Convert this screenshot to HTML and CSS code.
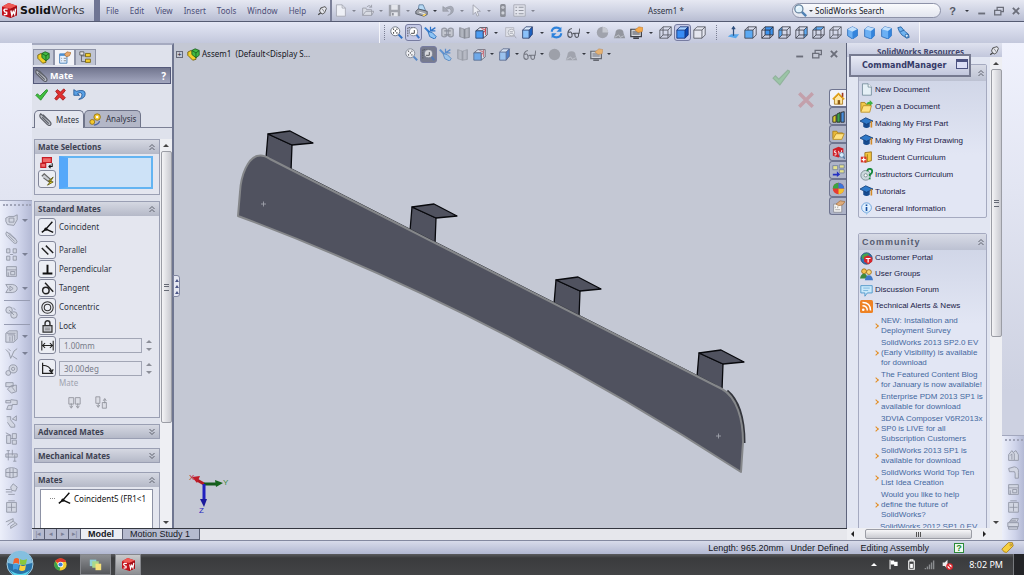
FILE: index.html
```html
<!DOCTYPE html>
<html lang="en">
<head>
    <meta charset="utf-8">
    <title>SolidWorks - Assem1</title>
    <link rel="stylesheet" href="styles.css">
</head>
<body>
    <svg class="sprite" aria-hidden="true">
        <symbol id="sw" viewBox="0 0 16 16"><path d="M0 4L7 0l9 3v10l-7 3-9-3z" fill="#c3121c"/><path d="M0 4L7 0l9 3-7 3z" fill="#ef5a55"/><path d="M9 6l7-3v10l-7 3z" fill="#a50d16"/><path d="M6 6.500H3l-1 1 1 2 2 .5v2l-3 .5M9.500 8l1 5 1.500-4 1.500 3 1-6" fill="none" stroke="#fff" stroke-width="1.500"/></symbol>
        <symbol id="pin" viewBox="0 0 16 16"><path d="M2 14l5-4" stroke="#444" stroke-width="2"/><path d="M6 3l7-2 2 3-3 7-4 2-4-5z" fill="#e6e8ee" stroke="#555" stroke-width="1.500"/><path d="M7 4q3 1 4 5" fill="none" stroke="#555"/></symbol>
        <symbol id="new" viewBox="0 0 16 16"><path d="M3 1h7l4 4v10H3z" fill="#eef0f6" stroke="#a2a5b0"/><path d="M10 1v4h4" fill="none" stroke="#a2a5b0"/></symbol>
        <symbol id="open" viewBox="0 0 16 16"><path d="M2 14V5h4l1 2h6v7zM2 14l4-5h10l-3 5" fill="#d9dce4" stroke="#9699a4"/><path d="M7 4q3-4 6 0m0-3v3h-3" fill="none" stroke="#9699a4"/></symbol>
        <symbol id="save" viewBox="0 0 16 16"><path d="M1 1h14v14H1z" fill="#a0a3ac"/><path d="M4 1h8v6H4zM4 10h8v5H4z" fill="#e4e6ec"/><path d="M5 11h2v3H5z" fill="#8a8d96"/></symbol>
        <symbol id="print" viewBox="0 0 16 16"><path d="M4 7L5 1h5l3 7z" fill="#b6daf6" stroke="#5b7b9b"/><path d="M1 9l3-3 11 3v4l-4 2-10-3z" fill="#a0a3ab" stroke="#484b55"/><path d="M5 10l7 2" stroke="#fff"/><path d="M9 14l3-2 2 1-3 2z" fill="#ffd75a"/></symbol>
        <symbol id="undo" viewBox="0 0 16 16"><path d="M1 3v6h7L5.500 7Q10 4 11 8t-4 6q8-2 7-8T4 5z" fill="#a6aab6" stroke="#868a96" stroke-width=".6"/></symbol>
        <symbol id="select" viewBox="0 0 16 16"><path d="M5 1v12l3-3 2 5 2-1-2-5h4z" fill="#eceef4" stroke="#9a9da8"/></symbol>
        <symbol id="rebuild" viewBox="0 0 16 16"><rect x="5" y="0" width="7" height="16" rx="2" fill="#8b8e97"/><circle cx="8.500" cy="4" r="2" fill="#c4c7cf"/><circle cx="8.500" cy="11" r="2" fill="#d0d3da"/></symbol>
        <symbol id="options" viewBox="0 0 16 16"><path d="M1 1h14v14H1z" fill="#e2e4ec" stroke="#a0a3ad"/><path d="M3 4h2M3 8h2M3 12h2M7 4h6M7 8h6M7 12h6" stroke="#9396a0" stroke-width="1.500"/></symbol>
        <symbol id="magnifier" viewBox="0 0 16 16"><path d="M9 9l6 6" stroke="#4f81b4" stroke-width="3"/><circle cx="6" cy="6" r="5" fill="#dff2fc" stroke="#64809c" stroke-width="1.500"/><path d="M3 6q1-3 4-3" stroke="#fff" fill="none"/></symbol>
        <symbol id="zoomfit" viewBox="0 0 16 16"><path d="M10 10l5 5" stroke="#2d6fc4" stroke-width="2.500"/><circle cx="6.500" cy="6.500" r="5.500" fill="#fff" stroke="#59616f"/><path d="M4 4h1M8 4h1M4 8.500h1M8 8.500h1M6 6h1" stroke="#222" stroke-width="2"/></symbol>
        <symbol id="zoomarea" viewBox="0 0 16 16"><path d="M1 13V2h9" fill="none" stroke="#444" stroke-dasharray="2 1"/><path d="M11 10l4 5" stroke="#3f78c8" stroke-width="2.500"/><circle cx="8" cy="7" r="5" fill="#fff" stroke="#7c8290"/><path d="M5 9h4V5" fill="none" stroke="#222"/></symbol>
        <symbol id="prev" viewBox="0 0 16 16"><path d="M1 2l6 6" stroke="#347dd2" stroke-width="2.500"/><path d="M5 7l5 1 5 5-2 3-6-3z" fill="#8cc3f5" stroke="#2267b4"/><path d="M8 6l6-4M14 6H8V1" fill="none" stroke="#2f74c8" stroke-width="1.500"/></symbol>
        <symbol id="lens" viewBox="0 0 16 16"><path d="M1 4q3-3 6 0v8q-3 3-6 0zM9 4q3-3 6 0v8q-3 3-6 0z" fill="#c3c6cf" stroke="#9599a5" stroke-width="1.500"/><path d="M4 6h8M4 11h8" stroke="#8b8f9a" stroke-width="1.500"/></symbol>
        <symbol id="sheets" viewBox="0 0 16 16"><path d="M2 2l6 2v11l-6-2zM8 4l6-2v12l-6 1z" fill="#a3a7b1" stroke="#868a94"/><path d="M5 3v11M11 3v11" stroke="#c5c9d2"/></symbol>
        <symbol id="section" viewBox="0 0 16 16"><path d="M1 6l5-4h9v9l-5 4V6z" fill="#dfe6f2" stroke="#373a48"/><path d="M1 6h9v9H1z" fill="#4c9df3" stroke="#27436e"/><path d="M8 3l5 2-3 4M13 2v9" fill="none" stroke="#c8323a"/></symbol>
        <symbol id="page" viewBox="0 0 16 16"><path d="M2 2h10v11H2z" fill="#dfe1e9" stroke="#b0b3bc"/><circle cx="9" cy="8" r="4" fill="#eceef3" stroke="#a4a7b1"/><path d="M12 11l3 4M7 7h4M7 9h4" stroke="#9c9faa"/></symbol>
        <symbol id="cube" viewBox="0 0 16 16"><path d="M2 5l4-4h8v9l-4 5H2z" fill="#dcecfe"/><path d="M10 5l4-4v9l-4 5z" fill="#1c61c2"/><path d="M2 5h8v10H2z" fill="#8ac1fa"/><path d="M2 5l4-4h8v9l-4 5H2zM2 5h8v10M10 5l4-4" fill="none" stroke="#293a66"/></symbol>
        <symbol id="refresh" viewBox="0 0 16 16"><path d="M2 7q1-5 6-5 3 0 5 2M14 9q-1 5-6 5-3 0-5-2" fill="none" stroke="#2d82db" stroke-width="2.500"/><path d="M14 1v6H8zM2 15V9h6z" fill="#2d82db"/></symbol>
        <symbol id="glasses" viewBox="0 0 16 16"><path d="M6 3Q1 4 1 10q0 4 3 4t2-4-4-2M7 10q1-2 2 0M10 9q-1 5 2 5t2-5M9 9h6q0-4 1-6" fill="none" stroke="#50535d" stroke-width="1.300"/></symbol>
        <symbol id="ball" viewBox="0 0 16 16"><circle cx="8" cy="8" r="7" fill="#a0a3ad"/><path d="M8 1v7h7A7 7 0 0 0 8 1z" fill="#c6c9d1"/></symbol>
        <symbol id="ball2" viewBox="0 0 16 16"><circle cx="8" cy="8" r="7" fill="#8d9098"/></symbol>
        <symbol id="scene" viewBox="0 0 16 16"><path d="M1 15l2-6a5 5 0 1 1 10 0l2 6z" fill="#93969f"/><path d="M2 14l5-3 2 3 4-2" stroke="#c9ccd4" fill="none"/></symbol>
        <symbol id="screen" viewBox="0 0 16 16"><path d="M1 4h13v9H1z" fill="#d8dade" stroke="#3e4048" stroke-width="1.500"/><path d="M3 6h9v5H3z" fill="#8e9199"/><path d="M4 15h7" stroke="#3e4048" stroke-width="2"/><path d="M6 5l5-4 5 1-1 5-5 1z" fill="#f5a94a" stroke="#b47023" stroke-width=".6"/></symbol>
        <symbol id="wire" viewBox="0 0 16 16"><path d="M1 5h10v10H1zM5 1h10v10H5zM1 5l4-4M11 5l4-4M11 15l4-4M1 15l4-4" fill="none" stroke="#50535d"/></symbol>
        <symbol id="outline" viewBox="0 0 16 16"><path d="M1 5l4-4h10v10l-4 4H1z" fill="#e4e6ef" stroke="#50535d"/><path d="M1 5h10v10M11 5l4-4" fill="none" stroke="#50535d"/></symbol>
        <symbol id="solid" viewBox="0 0 16 16"><path d="M1 5l4-4h10v10l-4 4H1z" fill="#a8d2ff"/><path d="M11 5l4-4v10l-4 4z" fill="#0b49b4"/><path d="M1 5h10v10H1z" fill="#398df5"/><path d="M1 5l4-4h10v10l-4 4H1zM1 5h10v10M11 5l4-4" fill="none" stroke="#152f72"/></symbol>
        <symbol id="normal" viewBox="0 0 16 16"><path d="M1 13l4-3h10l-4 5z" fill="#56a6ec"/><path d="M8 12V1M6 4l2-3 2 3" fill="none" stroke="#2d4f7e" stroke-width="1.500"/></symbol>
        <symbol id="c-front" viewBox="0 0 16 16"><path d="M1 5h10v10H1z" fill="#5ba9f3"/><path d="M1 5h10v10H1zM5 1h10v10l-4 4M5 5V1M1 5l4-4M11 5l4-4" fill="none" stroke="#3d404b"/></symbol>
        <symbol id="c-back" viewBox="0 0 16 16"><path d="M5 1h10v10H5z" fill="#3d93ee"/><path d="M1 5h10v10H1zM5 1h10v10H5zM1 5l4-4M11 5l4-4M11 15l4-4M1 15l4-4" fill="none" stroke="#2b2e39"/></symbol>
        <symbol id="c-left" viewBox="0 0 16 16"><path d="M1 5l4-4v10l-4 4z" fill="#5ba9f3"/><path d="M1 5h10v10H1zM5 1h10v10H5zM1 5l4-4M11 5l4-4M11 15l4-4M1 15l4-4" fill="none" stroke="#3d404b"/></symbol>
        <symbol id="c-right" viewBox="0 0 16 16"><path d="M11 5l4-4v10l-4 4z" fill="#5ba9f3"/><path d="M1 5h10v10H1zM5 1h10v10H5zM1 5l4-4M11 5l4-4M11 15l4-4M1 15l4-4" fill="none" stroke="#3d404b"/></symbol>
        <symbol id="c-top" viewBox="0 0 16 16"><path d="M1 5l4-4h10l-4 4z" fill="#5ba9f3"/><path d="M1 5h10v10H1zM5 1h10v10H5zM1 5l4-4M11 5l4-4M11 15l4-4M1 15l4-4" fill="none" stroke="#3d404b"/></symbol>
        <symbol id="hex" viewBox="0 0 16 16"><path d="M8 1l6 3v8l-6 4-6-4V4z" fill="#6cb0f4" stroke="#2869b6"/><path d="M8 1l6 3-6 3-6-3z" fill="#c2e0fc"/><path d="M8 7l6-3v8l-6 4z" fill="#3484dc"/></symbol>
        <symbol id="hex2" viewBox="0 0 16 16"><path d="M6 1l8 2v9l-4 4-8-3V4z" fill="#6cb0f4" stroke="#2869b6"/><path d="M6 1l8 2-4 3-8-2z" fill="#c2e0fc"/><path d="M10 6l4-3v9l-4 4z" fill="#3484dc"/></symbol>
        <symbol id="scope" viewBox="0 0 16 16"><path d="M1 2l4-1 4 5 5 4 1 4-3 1-6-4-3-4z" fill="#6fb3f0" stroke="#1f5c9f"/><circle cx="12" cy="12" r="2" fill="#d5eafc" stroke="#1f5c9f"/><path d="M4 7l5-2" stroke="#1f5c9f"/></symbol>
        <symbol id="min" viewBox="0 0 16 16"><path d="M2 12h11" stroke="#6b6e7a" stroke-width="3"/></symbol>
        <symbol id="restore" viewBox="0 0 16 16"><path d="M5 6V2h10v7h-4M1 7h10v7H1z" fill="none" stroke="#6b6e7a" stroke-width="2"/></symbol>
        <symbol id="close" viewBox="0 0 16 16"><path d="M3 3l10 10M13 3L3 13" stroke="#6b6e7a" stroke-width="3"/></symbol>
        <symbol id="asm" viewBox="0 0 16 16"><path d="M1 5l4-2 6 5v6l-4 1-6-6z" fill="#f2cf27" stroke="#6b5909"/><path d="M6 3l4-2 5 2v6l-4 3-5-4z" fill="#42b943" stroke="#175d1b"/><path d="M6 3l5 3v6M11 6l4-3" fill="none" stroke="#175d1b"/></symbol>
        <symbol id="props" viewBox="0 0 16 16"><path d="M2 4h9v11H2z" fill="#e6f1ff" stroke="#3572b0"/><path d="M2 3h9v3H2z" fill="#4b8fd3"/><path d="M4 9h1M7 9h3M4 12h1M7 12h3" stroke="#777"/><path d="M8 4l3-3 5 1-2 4-4 1z" fill="#e9a86a" stroke="#9b6128" stroke-width=".7"/></symbol>
        <symbol id="custom" viewBox="0 0 16 16"><path d="M2 5h10v10H2z" fill="#f6f6f4" stroke="#8a8c94"/><path d="M4 8v2M7 8v2M4 12h6" stroke="#999"/><path d="M5 5l5-4 6 1-3 4-5 1z" fill="#dcab7c" stroke="#9b6128" stroke-width=".7"/></symbol>
        <symbol id="config" viewBox="0 0 16 16"><path d="M3 3v10h6M3 6h6" fill="none" stroke="#555"/><path d="M1 1h5v4H1z" fill="#e4e4e4" stroke="#555"/><path d="M8 3h6v4H8zM8 10h6v4H8z" fill="#f3cd2f" stroke="#72600b"/></symbol>
        <symbol id="clip" viewBox="0 0 16 16"><path d="M2 1l11 9q3 3 1 5-2 1-4-1L2 6q-2-3 0-5zM4 5l8 8M5 2l8 8" fill="#b9bcc4" stroke="#5d6068" stroke-width="1.400"/></symbol>
        <symbol id="ok" viewBox="0 0 16 16"><path d="M1 9l2-2 3 3 8-8 2 1-9 12z" fill="#3fbf3f" stroke="#208520"/></symbol>
        <symbol id="cancel" viewBox="0 0 16 16"><path d="M2 4l2-2 4 3 4-4 2 2-4 5 4 4-3 3-4-4-4 4-2-2 4-5z" fill="#e03030" stroke="#9e1818"/></symbol>
        <symbol id="back" viewBox="0 0 16 16"><path d="M1 2v7h7L5.500 7Q10 4 11 8t-4 6q8-1 8-7T4 4z" fill="#5aa2e6" stroke="#1e5292"/></symbol>
        <symbol id="gear" viewBox="0 0 16 16"><circle cx="10" cy="5" r="4" fill="#f4c82c" stroke="#8b6b10"/><circle cx="10" cy="5" r="1.500" fill="#fff"/><circle cx="4" cy="11" r="3" fill="#f4c82c" stroke="#8b6b10"/><path d="M6 15q6-1 7-5" fill="none" stroke="#4a63a6" stroke-width="1.500"/></symbol>
        <symbol id="up2" viewBox="0 0 16 16"><path d="M3 8l5-5 5 5M3 14l5-5 5 5" fill="none" stroke="#50535f" stroke-width="1.800"/></symbol>
        <symbol id="down2" viewBox="0 0 16 16"><path d="M3 2l5 5 5-5M3 8l5 5 5-5" fill="none" stroke="#50535f" stroke-width="1.800"/></symbol>
        <symbol id="entities" viewBox="0 0 16 16"><path d="M3 2h11v6H3zM1 9h6v5H1z" fill="#f06a6a" stroke="#c51d25" stroke-width="1.500"/><path d="M15 9v4h-4m2-2l-2 2 2 2" fill="none" stroke="#111" stroke-width="1.300"/></symbol>
        <symbol id="multi" viewBox="0 0 16 16"><path d="M1 4l3-3 8 7-2 3-7-5" fill="#c9ccd3" stroke="#666" stroke-width="1.500"/><path d="M15 5l-6 5h3l-4 5 7-4-3-1z" fill="#f0dc22" stroke="#59530d"/></symbol>
        <symbol id="coincident" viewBox="0 0 16 16"><path d="M14 1L6 10M1 14l5-4 9 4" fill="none" stroke="#111" stroke-width="1.800"/><circle cx="6" cy="10" r="2" fill="#111"/></symbol>
        <symbol id="parallel" viewBox="0 0 16 16"><path d="M1 5l8 8M6 2l9 9" stroke="#222" stroke-width="1.800"/></symbol>
        <symbol id="perp" viewBox="0 0 16 16"><path d="M8 2v11M2 13h12" stroke="#111" stroke-width="2.400"/></symbol>
        <symbol id="tangent" viewBox="0 0 16 16"><circle cx="6" cy="10.500" r="4" fill="none" stroke="#222" stroke-width="1.800"/><path d="M5 1l10 11" stroke="#222" stroke-width="1.800"/></symbol>
        <symbol id="concentric" viewBox="0 0 16 16"><circle cx="8" cy="8" r="7" fill="none" stroke="#333" stroke-width="1.300"/><circle cx="8" cy="8" r="4" fill="none" stroke="#333" stroke-width="1.300"/></symbol>
        <symbol id="lock" viewBox="0 0 16 16"><path d="M5 7V4q0-3 3-3t3 3v3" fill="none" stroke="#333" stroke-width="1.800"/><path d="M2.500 7h11v8h-11z" fill="#c9cbd2" stroke="#333" stroke-width="1.500"/><path d="M5 10h6M5 12h6" stroke="#777"/></symbol>
        <symbol id="distance" viewBox="0 0 16 16"><path d="M1 2v12M15 2v12M2 8h12M5 5L2 8l3 3M11 5l3 3-3 3" fill="none" stroke="#222" stroke-width="1.300"/></symbol>
        <symbol id="angle" viewBox="0 0 16 16"><path d="M2 1v13h13M2 4q9 0 11 8M10 10l3 3 2-4" fill="none" stroke="#222" stroke-width="1.500"/></symbol>
        <symbol id="align" viewBox="0 0 16 16"><path d="M1 2h6v8H1zM9 2h6v8H9zM4 9v5M2 12l2 3 2-3M12 9v5M10 12l2 3 2-3" fill="#dcdee6" stroke="#8c8f98"/></symbol>
        <symbol id="anti" viewBox="0 0 16 16"><path d="M1 1h5v8H1zM9 8h5v7H9zM4 9v4M2 11l2 3 2-3M12 9V4M10 6l2-3 2 3" fill="#dcdee6" stroke="#8c8f98"/></symbol>
        <!-- greyed assembly tools -->
        <symbol id="g1" viewBox="0 0 16 16"><path d="M1 5l4-2h6l4-2v6l-4 7-8-1-2-4zM5 5h6v5H5z"/></symbol>
        <symbol id="g2" viewBox="0 0 16 16"><path d="M2 1l11 9q3 3 1 5-2 1-4-1L2 6q-2-3 0-5zM4 5l8 8M5 2l8 8"/></symbol>
        <symbol id="g3" viewBox="0 0 16 16"><path d="M2 1h4v5H2zM10 1h4v5h-4zM2 10h4v5H2zM10 10h4v5h-4zM6 8h4"/></symbol>
        <symbol id="g4" viewBox="0 0 16 16"><path d="M2 2h12v12H2zM2 6h12M7 8h5v4H7zM4 9v5"/></symbol>
        <symbol id="g5" viewBox="0 0 16 16"><path d="M1 3h8q6 1 6 5t-6 5H1l3-5zM6 5l4 3-4 3z"/></symbol>
        <symbol id="g6" viewBox="0 0 16 16"><circle cx="5" cy="5" r="4"/><circle cx="11" cy="11" r="4"/><path d="M5 5l6 6M10 2l3 3"/></symbol>
        <symbol id="g7" viewBox="0 0 16 16"><path d="M1 4l4-3h10v10l-4 4H1zM4 6h8v7M6 8v6M9 7v7M2 4h11"/></symbol>
        <symbol id="g8" viewBox="0 0 16 16"><path d="M1 3l4 4 2 7M7 14l4-9 4-3M4 2l3 3M9 11l6 4"/></symbol>
        <symbol id="g9" viewBox="0 0 16 16"><circle cx="10" cy="6" r="5"/><circle cx="10" cy="6" r="2"/><circle cx="4" cy="11" r="3"/></symbol>
        <symbol id="g10" viewBox="0 0 16 16"><path d="M1 2h9v5H1zM7 6l7-1v8l-6 2-5-5zM9 8l3 4"/></symbol>
        <symbol id="g11" viewBox="0 0 16 16"><path d="M1 3h6v3H1zM7 2l8 1v5H9l-1 6H2l2-5h5"/></symbol>
        <symbol id="g12" viewBox="0 0 16 16"><path d="M2 2h5v4l5 6v3H7L3 9M9 5l5-4v6z"/></symbol>
        <symbol id="g13" viewBox="0 0 16 16"><path d="M2 4h5v10H2zM9 2h5v6H9zM9 10h5v5H9zM1 1l6 3M7 8h3"/></symbol>
        <symbol id="g14" viewBox="0 0 16 16"><path d="M1 6h14v4H1zM4 2v12M9 1v7M12 7v8M2 2h4M10 15h4"/></symbol>
        <symbol id="g15" viewBox="0 0 16 16"><path d="M1 4q7-4 14 0v9q-7 3-14 0zM6 3v11M10 3v11M1 8h14"/></symbol>
        <symbol id="g16" viewBox="0 0 16 16"><path d="M7 5l3-4 5 4-2 5-5-1zM1 8h6M1 11h8M4 14h8"/></symbol>
        <symbol id="g17" viewBox="0 0 16 16"><path d="M2 3h12v12H2zM8 4v10M3 9h10M4 1h8"/></symbol>
        <symbol id="g18" viewBox="0 0 16 16"><path d="M1 6l9-4v3l5 4-8 5v-3l5-3M3 10l7-5"/></symbol>
        <symbol id="r1" viewBox="0 0 16 16"><path d="M2 14V7l4-5 3 4v8zM8 4l3-2 3 5v7H9M4 8l2-2v7"/></symbol>
        <symbol id="r2" viewBox="0 0 16 16"><path d="M2 3l7-2q6 1 5 7v7h-4V9q0-3-3-2L3 7z"/></symbol>
        <symbol id="r5" viewBox="0 0 16 16"><path d="M3 6l3-4h8l-2 4zM1 7h13v5H1zM2 12h11v3H2zM5 4h6"/></symbol>
        <symbol id="cap" viewBox="0 0 16 16"><path d="M4 7v5q4 3 8 0V7z" fill="#174b8f"/><path d="M0 5l7-4 9 4-8 4z" fill="#2f79c9" stroke="#123d78"/><path d="M14 5v8" stroke="#d28a28" stroke-width="2"/></symbol>
        <symbol id="doc" viewBox="0 0 16 16"><path d="M3 1h7l4 4v10H3z" fill="#e5f0f6" stroke="#6f8796"/><path d="M10 1v4h4" fill="#fff" stroke="#6f8796"/></symbol>
        <symbol id="folder" viewBox="0 0 16 16"><path d="M1 13V4h5l1 2h6v2" fill="#e8b93a" stroke="#a97c12"/><path d="M1 14l4-7h10l-3 7z" fill="#ffe282" stroke="#b98b1c"/></symbol>
        <symbol id="folderup" viewBox="0 0 16 16"><path d="M1 14V3h5l1 2h6v3" fill="#f0c94a" stroke="#a97c12"/><path d="M1 15l3-8h10l-2 8z" fill="#ffe282" stroke="#b98b1c"/><path d="M8 6q0-4 4-4V0l4 4-4 3V5q-2 0-4 1z" fill="#3eb043"/></symbol>
        <symbol id="books" viewBox="0 0 16 16"><path d="M6 2l8-1v11l-8 2z" fill="#f5c842" stroke="#936a10"/><path d="M9 4v9" stroke="#936a10"/><path d="M1 7h7v7H1z" fill="#d9372b"/><path d="M4.500 8v5M2 10.500h5" stroke="#fff" stroke-width="1.500"/></symbol>
        <symbol id="disc" viewBox="0 0 16 16"><circle cx="7" cy="9" r="6" fill="#cbd8dc" stroke="#71828a"/><circle cx="7" cy="9" r="2" fill="#fff" stroke="#71828a"/><path d="M9 4q0-3 3-3t3 3-3 4v2" fill="none" stroke="#16893c" stroke-width="2.200"/><path d="M11 12h2v2h-2z" fill="#16893c"/></symbol>
        <symbol id="info" viewBox="0 0 16 16"><circle cx="8" cy="7" r="6" fill="#e2f1ff" stroke="#5c98d5"/><path d="M6 12l2 4 3-4z" fill="#9cc4ea"/><path d="M8 6v5M8 3v2" stroke="#134ea0" stroke-width="2"/></symbol>
        <symbol id="globe" viewBox="0 0 16 16"><circle cx="8" cy="8" r="7" fill="#2f72b8" stroke="#1c4a6c"/><path d="M2 5q4-5 9-3l-3 5-5 2z" fill="#48a44e"/><path d="M5 6l5-2 5 3v5l-5 3-5-3z" fill="#d8262c"/><path d="M7 8h6M10 8v5" stroke="#fff" stroke-width="1.500"/></symbol>
        <symbol id="users" viewBox="0 0 16 16"><circle cx="5" cy="4" r="3" fill="#f5c14c" stroke="#9b6b10"/><path d="M0 13q1-6 5-6t4 6z" fill="#3e8a3f"/><circle cx="11" cy="5" r="3" fill="#fad77b" stroke="#9b6b10"/><path d="M6 15q1-6 5-6t5 6z" fill="#3f78c9"/></symbol>
        <symbol id="chat" viewBox="0 0 16 16"><path d="M1 2h14v9H9l-3 4v-4H1z" fill="#c9e8fa" stroke="#4190c6"/><path d="M4 5h8M4 8h6" stroke="#6fb0da"/></symbol>
        <symbol id="rss" viewBox="0 0 16 16"><rect width="16" height="16" rx="2" fill="#ee8224"/><circle cx="4" cy="12" r="1.600" fill="#fff"/><path d="M3 7q6 0 6 6M3 3q10 0 10 10" fill="none" stroke="#fff" stroke-width="1.800"/></symbol>
        <symbol id="home" viewBox="0 0 16 16"><path d="M3 8v7h10V8L8 3z" fill="#ffe7a0" stroke="#a87517"/><path d="M1 9l7-7 7 7" fill="none" stroke="#e0a018" stroke-width="2"/><path d="M12 1h2v5h-2z" fill="#a03a24"/><path d="M7 10h3v5H7z" fill="#8b5814"/></symbol>
        <symbol id="library" viewBox="0 0 16 16"><path d="M1 8l4-2v9H1z" fill="#d9cb34" stroke="#222"/><path d="M6 5l4-2v12H6z" fill="#3da34c" stroke="#222"/><path d="M11 3l4-1v13h-4z" fill="#4a8edc" stroke="#222"/></symbol>
        <symbol id="swfind" viewBox="0 0 16 16"><path d="M1 4l7-3 6 2v8l-6 3-7-2z" fill="#cf2029"/><path d="M5 6H3v2h2v3H3M8 6l1 5 1-3 1 2 1-5" fill="none" stroke="#fff"/><circle cx="12" cy="11" r="3" fill="#d4e9f8" stroke="#5a7fa6"/><path d="M14 13l2 3" stroke="#5a7fa6" stroke-width="2"/></symbol>
        <symbol id="palette" viewBox="0 0 16 16"><path d="M1 2h6v5H1zM9 1h6v4H9zM9 7h6v4H9z" fill="#e6e28c" stroke="#6d7da0"/><path d="M1 12h5V9l4 4-4 3v-2H1z" fill="#2330c2"/></symbol>
        <symbol id="appear" viewBox="0 0 16 16"><circle cx="8" cy="8" r="7" fill="#e63b31"/><path d="M8 8L1 8A7 7 0 0 1 8 1z" fill="#38a744"/><path d="M8 8h7a7 7 0 0 1-7 7z" fill="#f1c32e"/><path d="M8 1a7 7 0 0 1 7 7H8z" fill="#3b75d8"/></symbol>
        <symbol id="tag" viewBox="0 0 16 16"><path d="M1 10L9 2h5l1 4-8 8q-3 1-6-4z" fill="#f7cf3e" stroke="#a57910"/><circle cx="12" cy="5" r="1" fill="#fff" stroke="#a57910"/></symbol>
        <symbol id="orb" viewBox="0 0 28 28"><circle cx="14" cy="14" r="13" fill="#2872a8" stroke="#a3cde2"/><path d="M2 13a12 12 0 0 1 24 0q-12 4-24 0z" fill="#85bfdf"/><path d="M4 20q10 8 20 0-4 7-10 7T4 20z" fill="#5ad6ec"/><path d="M8 9q3-2 5 0v5q-3-2-6 0z" fill="#f0622c"/><path d="M14 9q3 2 7 0l-1 5q-3 2-6 0z" fill="#8ac83c"/><path d="M7 15q3-2 6 0l-1 5q-3-2-5 0z" fill="#3f9be0"/><path d="M14 15q3 2 6 0l-1 5q-3 2-6 0z" fill="#fbd13c"/></symbol>
        <symbol id="chrome" viewBox="0 0 16 16"><circle cx="8" cy="8" r="7.500" fill="#f3cb30"/><path d="M8 8L1.500 4A7.500 7.500 0 0 1 15 5H8z" fill="#df3a2c"/><path d="M8 8l-1 7.500A7.500 7.500 0 0 1 1.500 4L5 9z" fill="#3aa24a"/><circle cx="8" cy="8" r="3.500" fill="#fff"/><circle cx="8" cy="8" r="2.600" fill="#3d80dc"/></symbol>
        <symbol id="notes" viewBox="0 0 16 16"><path d="M1 2h8v8H1z" fill="#8dcfd8"/><path d="M4 4h8v8H4z" fill="#a8d88b"/><path d="M8 7h7v8H8z" fill="#f5e17b"/></symbol>
        <symbol id="flag" viewBox="0 0 16 16"><path d="M3 1v14" stroke="#fff" stroke-width="1.500"/><path d="M4 2h5v2h5v6H9V8H4z" fill="#fff"/></symbol>
        <symbol id="battery" viewBox="0 0 16 16"><path d="M4 3h8v12H4zM6 1h4v2H6z" fill="none" stroke="#fff" stroke-width="1.600"/><path d="M6 7h4v6H6z" fill="#fff"/></symbol>
        <symbol id="signal" viewBox="0 0 16 16"><path d="M2 15v-2M5 15v-4M8 15V8M11 15V5M14 15V2" stroke="#8b8d90" stroke-width="2"/></symbol>
        <symbol id="mute" viewBox="0 0 16 16"><path d="M1 5h3l4-4v13l-4-4H1z" fill="#eee"/><circle cx="11" cy="11" r="4" fill="#fff" stroke="#d8232a" stroke-width="2"/><path d="M8 8l6 6" stroke="#d8232a" stroke-width="2"/></symbol>
    </svg>

    <header class="titlebar">
        <div class="logo"><svg><use href="#sw"/></svg><b>Solid</b>Works</div>
        <nav class="menu">
            <a href="#">File</a><a href="#">Edit</a><a href="#">View</a><a href="#">Insert</a><a href="#">Tools</a><a href="#">Window</a><a href="#">Help</a>
            <button aria-label="Pin menu"><svg><use href="#pin"/></svg></button>
        </nav>
        <div class="quick">
            <button aria-label="New"><svg><use href="#new"/></svg></button><i class="caret dim"></i>
            <button aria-label="Open"><svg><use href="#open"/></svg></button><i class="caret dim"></i>
            <button aria-label="Save"><svg><use href="#save"/></svg></button><i class="caret dim"></i>
            <button aria-label="Print"><svg><use href="#print"/></svg></button><i class="caret"></i>
            <button aria-label="Undo"><svg><use href="#undo"/></svg></button><i class="caret dim"></i>
            <button aria-label="Select"><svg><use href="#select"/></svg></button><i class="caret dim"></i>
            <button aria-label="Rebuild"><svg><use href="#rebuild"/></svg></button>
            <button aria-label="Options"><svg><use href="#options"/></svg></button><i class="caret dim"></i>
        </div>
        <div class="doc-name">Assem1 *</div>
        <div class="search">
            <svg><use href="#magnifier"/></svg><i class="caret"></i>
            <input type="text" value="SolidWorks Search" aria-label="SolidWorks Search">
        </div>
        <div class="win-btns">
            <button class="help" aria-label="Help">?</button><i class="caret"></i>
            <button aria-label="Minimize"><svg><use href="#min"/></svg></button>
            <button aria-label="Restore"><svg><use href="#restore"/></svg></button>
            <button aria-label="Close"><svg><use href="#close"/></svg></button>
        </div>
    </header>

    <div class="toolbar">
        <div class="tools">
            <i class="grip"></i>
            <button aria-label="Zoom to fit"><svg><use href="#zoomfit"/></svg></button>
            <button class="on" aria-label="Zoom to area"><svg><use href="#zoomarea"/></svg></button>
            <button aria-label="Previous view"><svg><use href="#prev"/></svg></button>
            <button aria-label="Zoom"><svg><use href="#lens"/></svg></button>
            <button aria-label="Sheets"><svg><use href="#sheets"/></svg></button>
            <button aria-label="Section view"><svg><use href="#section"/></svg></button><i class="caret"></i>
            <button aria-label="Page zoom"><svg><use href="#page"/></svg></button>
            <button aria-label="View orientation"><svg><use href="#cube"/></svg></button><i class="caret"></i>
            <button aria-label="Rotate view"><svg><use href="#refresh"/></svg></button>
            <button aria-label="Hide or show items"><svg><use href="#glasses"/></svg></button><i class="caret"></i>
            <button aria-label="Edit appearance"><svg><use href="#ball"/></svg></button>
            <button aria-label="Apply scene"><svg><use href="#scene"/></svg></button>
            <button aria-label="View settings"><svg><use href="#screen"/></svg></button><i class="caret"></i>
            <button aria-label="Wireframe"><svg><use href="#wire"/></svg></button>
            <button class="on" aria-label="Shaded with edges"><svg><use href="#solid"/></svg></button>
            <button aria-label="Hidden lines removed"><svg><use href="#outline"/></svg></button>
            <i class="grip"></i>
            <button aria-label="Normal to"><svg><use href="#normal"/></svg></button>
            <button aria-label="Front"><svg><use href="#c-front"/></svg></button>
            <button aria-label="Back"><svg><use href="#c-back"/></svg></button>
            <button aria-label="Left"><svg><use href="#c-left"/></svg></button>
            <button aria-label="Right"><svg><use href="#c-right"/></svg></button>
            <button aria-label="Top"><svg><use href="#c-top"/></svg></button>
            <button aria-label="Bottom"><svg><use href="#wire"/></svg></button>
            <button aria-label="Isometric"><svg><use href="#hex"/></svg></button>
            <button aria-label="Trimetric"><svg><use href="#hex2"/></svg></button>
            <button aria-label="Dimetric"><svg><use href="#hex2"/></svg></button>
            <button aria-label="Camera"><svg><use href="#scope"/></svg></button>
        </div>
    </div>

    <main class="work">
        <aside class="edge left">
            <div class="edge-tools">
                <i class="dots"></i>
                <button class="drop" aria-label="Insert component"><svg><use href="#g1"/></svg></button>
                <button aria-label="Mate"><svg><use href="#g2"/></svg></button>
                <button class="drop" aria-label="Component pattern"><svg><use href="#g3"/></svg></button>
                <button aria-label="Smart fasteners"><svg><use href="#g4"/></svg></button>
                <button class="drop" aria-label="Move component"><svg><use href="#g5"/></svg></button>
                <hr>
                <button aria-label="Show hidden"><svg><use href="#g6"/></svg></button>
                <hr>
                <button class="drop" aria-label="Assembly features"><svg><use href="#g7"/></svg></button>
                <button class="drop" aria-label="Reference geometry"><svg><use href="#g8"/></svg></button>
                <button aria-label="Motion study"><svg><use href="#g9"/></svg></button>
                <button aria-label="Bill of materials"><svg><use href="#g10"/></svg></button>
                <button aria-label="Exploded view"><svg><use href="#g11"/></svg></button>
                <button aria-label="Explode line"><svg><use href="#g12"/></svg></button>
                <button aria-label="Interference"><svg><use href="#g13"/></svg></button>
                <button aria-label="Clearance"><svg><use href="#g14"/></svg></button>
                <button aria-label="Hole alignment"><svg><use href="#g15"/></svg></button>
                <button aria-label="Visualization"><svg><use href="#g16"/></svg></button>
                <button aria-label="Performance"><svg><use href="#g17"/></svg></button>
                <button aria-label="Belt"><svg><use href="#g18"/></svg></button>
            </div>
        </aside>

        <div class="center">
            <div class="split">
                <section class="props">
                    <div class="mgr-tabs">
                        <button aria-label="Feature tree"><svg><use href="#asm"/></svg></button>
                        <button class="active" aria-label="Properties"><svg><use href="#props"/></svg></button>
                        <button aria-label="Configurations"><svg><use href="#config"/></svg></button>
                    </div>
                    <h2 class="mate-title"><svg><use href="#clip"/></svg>Mate<button aria-label="Help">?</button></h2>
                    <div class="confirm">
                        <button aria-label="OK"><svg><use href="#ok"/></svg></button>
                        <button aria-label="Cancel"><svg><use href="#cancel"/></svg></button>
                        <button aria-label="Undo"><svg><use href="#back"/></svg></button>
                    </div>
                    <div class="tabs">
                        <button class="active"><svg><use href="#clip"/></svg>Mates</button>
                        <button><svg><use href="#gear"/></svg>Analysis</button>
                    </div>
                    <div class="scroller">
                        <div class="groups">
                            <div class="group">
                                <h3>Mate Selections<svg><use href="#up2"/></svg></h3>
                                <div class="selection">
                                    <div class="sel-icons">
                                        <svg><use href="#entities"/></svg>
                                        <button class="sq" aria-label="Multiple mate mode"><svg><use href="#multi"/></svg></button>
                                    </div>
                                    <textarea aria-label="Entities to mate"></textarea>
                                </div>
                            </div>
                            <div class="group">
                                <h3>Standard Mates<svg><use href="#up2"/></svg></h3>
                                <div class="mates">
                                    <div class="first"><button class="sq" id="m1"><svg><use href="#coincident"/></svg></button><label for="m1">Coincident</label></div>
                                    <div><button class="sq" id="m2"><svg><use href="#parallel"/></svg></button><label for="m2">Parallel</label></div>
                                    <div><button class="sq" id="m3"><svg><use href="#perp"/></svg></button><label for="m3">Perpendicular</label></div>
                                    <div><button class="sq" id="m4"><svg><use href="#tangent"/></svg></button><label for="m4">Tangent</label></div>
                                    <div><button class="sq" id="m5"><svg><use href="#concentric"/></svg></button><label for="m5">Concentric</label></div>
                                    <div><button class="sq" id="m6"><svg><use href="#lock"/></svg></button><label for="m6">Lock</label></div>
                                    <div><button class="sq" aria-label="Distance"><svg><use href="#distance"/></svg></button><input type="text" value="1.00mm" aria-label="Distance"><span class="spin"><button aria-label="More"></button><button aria-label="Less"></button></span></div>
                                    <div class="angle"><button class="sq" aria-label="Angle"><svg><use href="#angle"/></svg></button><input type="text" value="30.00deg" aria-label="Angle"><span class="spin"><button aria-label="More"></button><button aria-label="Less"></button></span></div>
                                    <p>Mate</p>
                                    <div class="flip">
                                        <button aria-label="Aligned"><svg><use href="#align"/></svg></button>
                                        <button aria-label="Anti-aligned"><svg><use href="#anti"/></svg></button>
                                    </div>
                                </div>
                            </div>
                            <div class="group closed"><h3>Advanced Mates<svg><use href="#down2"/></svg></h3></div>
                            <div class="group closed"><h3>Mechanical Mates<svg><use href="#down2"/></svg></h3></div>
                            <div class="group last">
                                <h3>Mates<svg><use href="#up2"/></svg></h3>
                                <ul class="mate-list"><li><svg><use href="#coincident"/></svg>Coincident5 (FR1&lt;1</li></ul>
                            </div>
                        </div>
                        <div class="vbar"><i class="up"></i><div class="thumb props-thumb"></div><i class="down"></i></div>
                    </div>
                </section>

                <section class="view">
                    <svg class="model" viewBox="174 43 672 485">
                        <defs>
                            <g id="bracket" fill="#50525f" stroke="#08090d" stroke-width="1.300" stroke-linejoin="round">
                                <path d="M268 134l24 11-1 26-25-13z"/>
                                <path d="M268 134l22-3 23 12-21 2z"/>
                            </g>
                        </defs>
                        <use href="#bracket"/>
                        <use href="#bracket" x="144" y="73"/>
                        <use href="#bracket" x="288" y="146"/>
                        <use href="#bracket" x="431" y="219"/>
                        <path d="M292 169L716 385" stroke="#33353c" stroke-width="1"/>
                        <path d="M727 391q17 14 17 52" fill="none" stroke="#33353c" stroke-width="3"/>
                        <path d="M238 216L240 192C241 174 248 159 257 156Q263 154 270 159L722 389C737 397 743 420 743 442L741 472Q490 310 238 216z" fill="#50525f" stroke="#85878a" stroke-width="2" stroke-linejoin="round"/>
                        <path d="M261 204h5M263.500 201.500v5M716 436h5M718.500 433.500v5" stroke="#a7a9b2" stroke-width=".8"/>
                        <path d="M204 484l-7-4" stroke="#b01a24" stroke-width="3"/><path d="M192 477l8-1-3 7z" fill="#c01c28"/>
                        <path d="M204 484h13" stroke="#14591c" stroke-width="3"/><path d="M215 480l8 3-7 4z" fill="#14641c"/>
                        <path d="M204 484v17" stroke="#2020c0" stroke-width="3"/><path d="M200 499h7l-3 8z" fill="#1a1a9c"/>
                        <text x="189" y="480" fill="#c01c28">X</text><text x="223" y="485" fill="#3a8a40">Y</text><text x="199" y="513" fill="#2424c0">Z</text>
                    </svg>
                    <div class="view-top">
                        <div class="tree"><button aria-label="Expand">+</button><svg><use href="#asm"/></svg><span>Assem1 &nbsp;(Default&lt;Display S...</span></div>
                        <div class="tools headsup">
                            <button aria-label="Zoom to fit"><svg><use href="#zoomfit"/></svg></button>
                            <button class="on" aria-label="Zoom to area"><svg><use href="#zoomarea"/></svg></button>
                            <button aria-label="Previous view"><svg><use href="#prev"/></svg></button>
                            <button aria-label="Sheets"><svg><use href="#sheets"/></svg></button>
                            <button aria-label="Section view"><svg><use href="#section"/></svg></button><i class="caret"></i>
                            <button aria-label="View orientation"><svg><use href="#cube"/></svg></button><i class="caret"></i>
                            <button aria-label="Hide or show items"><svg><use href="#glasses"/></svg></button><i class="caret"></i>
                            <button aria-label="Edit appearance"><svg><use href="#ball2"/></svg></button>
                            <button aria-label="Apply scene"><svg><use href="#scene"/></svg></button><i class="caret"></i>
                            <button aria-label="View settings"><svg><use href="#screen"/></svg></button><i class="caret"></i>
                        </div>
                        <div class="win-btns doc">
                            <button aria-label="Minimize document"><svg><use href="#min"/></svg></button>
                            <button aria-label="Restore document"><svg><use href="#restore"/></svg></button>
                            <button aria-label="Close document"><svg><use href="#close"/></svg></button>
                        </div>
                    </div>
                    <button class="ghost yes" aria-label="Accept"><svg><use href="#ok"/></svg></button>
                    <button class="ghost no" aria-label="Reject"><svg viewBox="0 0 16 16"><path d="M2 2l12 12M14 2L2 14" stroke="#c2474f" stroke-width="3"/></svg></button>
                    <button class="handle" aria-label="Collapse panel"><i></i><i></i><i></i></button>
                    <div class="side-tabs">
                        <button class="active" aria-label="Resources"><svg><use href="#home"/></svg></button>
                        <button aria-label="Design library"><svg><use href="#library"/></svg></button>
                        <button aria-label="File explorer"><svg><use href="#folder"/></svg></button>
                        <button aria-label="Search"><svg><use href="#swfind"/></svg></button>
                        <button aria-label="View palette"><svg><use href="#palette"/></svg></button>
                        <button aria-label="Appearances"><svg><use href="#appear"/></svg></button>
                        <button aria-label="Custom properties"><svg><use href="#custom"/></svg></button>
                    </div>
                </section>
            </div>
            <div class="sheet-tabs">
                <button class="nav" aria-label="First">|◂</button><button class="nav" aria-label="Previous">◂</button><button class="nav" aria-label="Next">▸</button><button class="nav" aria-label="Last">▸|</button>
                <button class="active">Model</button><button>Motion Study 1</button>
            </div>
        </div>

        <aside class="pane">
            <div class="pane-head">SolidWorks Resources<svg><use href="#pin"/></svg></div>
            <div class="float-bar">CommandManager<i></i></div>
            <div class="pane-scroll">
                <div class="pane-body">
                    <section class="card start-links">
                        <h3><svg><use href="#up2"/></svg></h3>
                        <ul class="links">
                            <li><a href="#"><svg><use href="#doc"/></svg>New Document</a></li>
                            <li><a href="#"><svg><use href="#folderup"/></svg>Open a Document</a></li>
                            <li><a href="#"><svg><use href="#cap"/></svg>Making My First Part</a></li>
                            <li><a href="#"><svg><use href="#cap"/></svg>Making My First Drawing</a></li>
                            <li><a href="#"><svg><use href="#books"/></svg>&nbsp;Student Curriculum</a></li>
                            <li><a href="#"><svg><use href="#disc"/></svg>Instructors Curriculum</a></li>
                            <li><a href="#"><svg><use href="#cap"/></svg>Tutorials</a></li>
                            <li><a href="#"><svg><use href="#info"/></svg>General Information</a></li>
                        </ul>
                    </section>
                    <section class="card community">
                        <h3>Community<svg><use href="#up2"/></svg></h3>
                        <ul class="links">
                            <li><a href="#"><svg><use href="#globe"/></svg>Customer Portal</a></li>
                            <li><a href="#"><svg><use href="#users"/></svg>User Groups</a></li>
                            <li><a href="#"><svg><use href="#chat"/></svg>Discussion Forum</a></li>
                            <li><a href="#"><svg><use href="#rss"/></svg>Technical Alerts &amp; News</a></li>
                        </ul>
                        <ul class="news">
                            <li><a href="#">NEW: Installation and<br>Deployment Survey</a></li>
                            <li><a href="#">SolidWorks 2013 SP2.0 EV<br>(Early Visibility) is available<br>for download</a></li>
                            <li><a href="#">The Featured Content Blog<br>for January is now available!</a></li>
                            <li><a href="#">Enterprise PDM 2013 SP1 is<br>available for download</a></li>
                            <li><a href="#">3DVIA Composer V6R2013x<br>SP0 is LIVE for all<br>Subscription Customers</a></li>
                            <li><a href="#">SolidWorks 2013 SP1 is<br>available for download</a></li>
                            <li><a href="#">SolidWorks World Top Ten<br>List Idea Creation</a></li>
                            <li><a href="#">Would you like to help<br>define the future of<br>SolidWorks?</a></li>
                            <li class="more"><a href="#">SolidWorks 2012 SP1.0 EV</a></li>
                        </ul>
                    </section>
                </div>
                <div class="vbar"><i class="up"></i><div class="thumb pane-thumb"></div><i class="down"></i></div>
            </div>
            <div class="hbar"><i class="lt"></i><div class="thumb"></div><i class="rt"></i></div>
        </aside>

        <aside class="edge right">
            <div class="edge-tools">
                <i class="dots"></i>
                <button aria-label="Design checker"><svg><use href="#r1"/></svg></button>
                <button aria-label="Fillet"><svg><use href="#r2"/></svg></button>
                <button aria-label="Save table"><svg><use href="#g4"/></svg></button>
                <button aria-label="Grid"><svg><use href="#g17"/></svg></button>
                <button aria-label="Layers"><svg><use href="#r5"/></svg></button>
            </div>
        </aside>
    </main>

    <footer class="status">
        <span>Length: 965.20mm</span>
        <span>Under Defined</span>
        <span class="mode">Editing Assembly</span>
        <button class="qm" aria-label="Quick tips">?</button>
        <button class="tag" aria-label="Tags"><svg><use href="#tag"/></svg></button>
    </footer>

    <div class="taskbar">
        <button class="start" aria-label="Start"><svg><use href="#orb"/></svg></button>
        <button class="app" aria-label="Chrome"><svg><use href="#chrome"/></svg></button>
        <button class="app open" aria-label="Sticky Notes"><svg><use href="#notes"/></svg></button>
        <button class="app open current" aria-label="SolidWorks"><svg><use href="#sw"/></svg></button>
        <div class="tray">
            <i class="tri"></i>
            <svg><use href="#flag"/></svg>
            <svg><use href="#battery"/></svg>
            <svg><use href="#signal"/></svg>
            <svg><use href="#mute"/></svg>
            <time>8:02 PM</time>
        </div>
        <button class="desktop" aria-label="Show desktop"></button>
    </div>
</body>
</html>
```
FILE: styles.css
```css
* {box-sizing: border-box;}

body {
    margin: 0;
    height: 100vh;
    display: flex;
    flex-direction: column;
    overflow: hidden;
    font: 8px/12px "Noto Sans", "Open Sans", sans-serif;
    color: #2f3342;
    background: #c4c8d4;}

button {
    font: inherit;
    color: inherit;
    padding: 0;
    border: 0;
    background: none;
    display: flex;
    align-items: center;
    justify-content: center;}

svg {
    display: block;
    width: 13px;
    height: 13px;
    flex: none;}

a {color: inherit; text-decoration: none;}
h2, h3, ul, p {margin: 0; padding: 0;}
ul {list-style: none;}
.sprite {display: none;}

.caret {
    width: 12px;
    display: flex;
    justify-content: center;
    flex: none;}

.caret::before {
    content: "";
    border: 2px solid transparent;
    border-top-color: #33363f;
    border-bottom: 0;}

.caret.dim {opacity: 0.5;}

/* title bar */
.titlebar {
    height: 22px;
    flex: none;
    display: flex;
    align-items: center;
    background: linear-gradient(#e6e8f2, #d0d4e4 50%, #b8bdd2);
    border-bottom: 1px solid #555b72;}

.logo {
    width: 100px;
    height: 21px;
    display: flex;
    align-items: center;
    padding-left: 2px;
    border-right: 6px solid #6f7594;
    font: 11px/20px "DejaVu Sans", sans-serif;
    color: #3b3d46;}

.logo svg {width: 15px; height: 15px; margin-right: 3px;}
.logo b {color: #111;}

.menu {
    width: 232px;
    height: 21px;
    display: flex;
    align-items: center;
    gap: 11px;
    padding-left: 6px;
    border-right: 2px solid #7b8099;
    color: #4d4f78;}

.menu svg {width: 10px; height: 10px;}

.quick {display: flex; align-items: center;}
.quick button {width: 17px; height: 18px;}
.quick .caret {width: 10px;}

.doc-name {flex: 1; text-align: center; padding-left: 2px;}

.search {
    width: 149px;
    height: 15px;
    display: flex;
    align-items: center;
    background: linear-gradient(#fafbfd, #e2e5ef);
    border: 1px solid #8d92a8;
    border-radius: 8px;
    padding-left: 1px;}

.search input {
    width: 100px;
    padding: 0;
    border: 0;
    background: none;
    font: inherit;
    color: #16181f;}

.search .caret {width: 8px;}

.win-btns {
    display: flex;
    align-items: center;
    padding-left: 3px;}

.win-btns button {width: 17px; height: 18px;}
.win-btns svg {width: 10px; height: 10px;}
.win-btns .help {font: bold 11px/16px "Liberation Sans", sans-serif; color: #555865;}

/* view toolbar */
.toolbar {
    height: 21px;
    flex: none;
    display: flex;
    justify-content: flex-end;
    padding-right: 104px;
    background: linear-gradient(#e4e7f5, #c3c8dc);}

.tools {display: flex; align-items: center;}

.toolbar .tools {
    border-left: 1px solid #f4f5fa;
    border-right: 1px solid #f4f5fa;
    padding-right: 7px;}

.tools button {
    width: 17px;
    height: 17px;
    flex: none;
    border: 1px solid transparent;
    border-radius: 3px;}

.tools .on {background: #c4c9e6; border-color: #777ca0;}

.grip {
    width: 17px;
    height: 15px;
    display: flex;
    justify-content: center;}

.toolbar .grip:first-child {width: 8px;}
.grip::before {content: ""; border-left: 1px dotted #7b7f94;}

/* main area */
.work {
    flex: 1;
    min-height: 0;
    display: flex;}

.edge {
    display: flex;
    flex-direction: column;
    justify-content: flex-end;
    flex: none;
    background: linear-gradient(#f0f2fd, #e2e5f2 30%, #cdd1e1 70%);}

.left {width: 32px;}
.right {width: 22px;}

.edge-tools {
    display: flex;
    flex-direction: column;
    background: linear-gradient(90deg, #eceffa, #ced3ea 60%, #b3b9d4);
    border-top: 1px solid #a2a7bd;
    padding: 3px 0 8px;}

.dots {
    border-top: 2px dotted #a0a4b8;
    margin: 0 1px 6px 3px;}

.edge-tools button {
    width: 22px;
    height: 17px;
    position: relative;}

.edge-tools svg {fill: #d2d6e2; stroke: #8d91a0;}

.drop::after {
    content: "";
    position: absolute;
    right: -6px;
    top: 7px;
    border: 3px solid transparent;
    border-top-color: #7b8095;
    border-bottom: 0;}

.edge-tools hr {
    width: 26px;
    border: 0;
    border-top: 1px solid #979cb2;
    margin: 3px 0 3px 4px;}

.center {
    flex: 1;
    min-width: 0;
    display: flex;
    flex-direction: column;}

.split {flex: 1; min-height: 0; display: flex;}

/* property manager */
.props {
    width: 142px;
    flex: none;
    display: flex;
    flex-direction: column;
    background: #dfe2ec;
    border-top: 2px solid #a5aac0;
    border-right: 2px solid #6f7690;}

.mgr-tabs {
    display: flex;
    height: 20px;
    padding: 4px 0 0 1px;}

.mgr-tabs button {
    width: 21px;
    height: 16px;
    background: #c0c5d4;
    border: 1px solid #8f94a8;
    border-bottom: 0;}

.mgr-tabs .active {background: #f2f3f8;}

.mate-title {
    height: 17px;
    display: flex;
    align-items: center;
    margin: 2px 1px 0;
    padding: 0 4px 0 1px;
    gap: 2px;
    font-size: 9px;
    color: #fff;
    background: linear-gradient(#72768f, #a3a7bf);
    border: 1px solid #54597a;}

.mate-title button {margin-left: auto; font-size: 10px;}

.confirm {
    display: flex;
    gap: 6px;
    padding: 4px 3px 0;}

.confirm button {height: 13px;}

.tabs {
    display: flex;
    height: 22px;
    margin-top: 5px;
    padding: 4px 0 0 2px;
    border-bottom: 1px solid #7b8095;}

.tabs button {
    gap: 4px;
    padding: 0 4px;
    border: 1px solid #6f7489;
    border-bottom: 0;
    border-radius: 5px 5px 0 0;
    background: #b3b7c7;}

.tabs .active {background: #e4e6ef; height: 18px;}

.scroller {
    flex: 1;
    min-height: 0;
    display: flex;
    margin-top: 11px;}

.groups {
    flex: 1;
    padding-left: 2px;
    overflow: hidden;
    display: flex;
    flex-direction: column;}

.group {
    border: 1px solid #9a9fb3;
    background: #e4e6ef;
    margin-bottom: 6px;
    flex: none;}

.group h3 {
    height: 14px;
    display: flex;
    align-items: center;
    justify-content: space-between;
    padding: 0 3px;
    font-size: 8px;
    color: #3e4252;
    background: linear-gradient(#d5d8e2, #b5b9c8);}

.group h3 svg {width: 8px; height: 8px;}
.closed {margin-bottom: 9px;}
.closed h3 {height: 13px;}

.selection {
    display: flex;
    gap: 4px;
    padding: 2px 6px 5px 3px;}

.sel-icons {width: 17px;}
.sel-icons > svg {margin: 0 auto 1px;}

.sq {
    width: 18px;
    height: 18px;
    border: 1px solid #83879a;
    border-radius: 3px;
    background: #eceef4;}

.selection textarea {
    flex: 1;
    min-width: 0;
    height: 33px;
    resize: none;
    border: 2px solid #63b4f2;
    border-left: 9px solid #55a8fa;
    background: #cde2f7;}

.mates {
    display: flex;
    flex-direction: column;
    gap: 1px;
    padding: 2px 3px;}

.mates div {
    display: flex;
    align-items: center;
    gap: 3px;
    height: 18px;}

.mates .first {margin-bottom: 4px;}
.mates .angle {margin-top: 4px;}
.mates .sq {flex: none;}

.mates input {
    width: 83px;
    height: 15px;
    padding: 0 4px;
    border: 1px solid #a2a6b5;
    background: #e4e6ef;
    font: inherit;
    color: #777b88;}

.spin {
    display: flex;
    flex-direction: column;
    gap: 5px;
    padding-left: 1px;}

.spin button {border: 3px solid transparent; border-top: 0; border-bottom-color: #8b8e98;}
.spin button + button {border: 3px solid transparent; border-bottom: 0; border-top-color: #8b8e98;}

.mates p {
    padding-left: 21px;
    line-height: 10px;
    color: #a0a4b0;}

.mates .flip {
    padding-left: 30px;
    gap: 14px;
    height: 26px;}

.last {flex: 1; margin: 0; border-bottom: 0;}

.mate-list {
    height: 100px;
    margin: 2px 6px 0 5px;
    border: 1px solid #8d92a5;
    background: #fff;
    color: #111;
    padding: 2px 0 0 9px;
    overflow: hidden;
    white-space: nowrap;}

.mate-list li {display: flex; align-items: center; gap: 3px;}
.mate-list li::before {content: ""; width: 5px; border-top: 1px dotted #888;}

/* scroll bars */
.vbar {
    width: 12px;
    flex: none;
    display: flex;
    flex-direction: column;
    align-items: center;
    background: #eeeff3;}

.vbar .up, .vbar .down {
    height: 12px;
    flex: none;
    display: flex;
    align-items: center;}

.vbar .down {margin-top: auto;}
.vbar .up::before {content: ""; border: 3px solid transparent; border-top: 0; border-bottom-color: #444;}
.vbar .down::before {content: ""; border: 3px solid transparent; border-bottom: 0; border-top-color: #444;}

.thumb {
    display: flex;
    align-items: center;
    justify-content: center;
    border: 1px solid #9b9da5;
    border-radius: 2px;
    background: linear-gradient(90deg, #f4f4f6, #c9cad0);}

.vbar .thumb {width: 11px;}
.vbar .thumb::before {content: ""; width: 5px; height: 5px; border: 1px solid #666a75; border-width: 1px 0; background: linear-gradient(#0000 1px, #666a75 1px 2px, #0000 2px);}
.props-thumb {height: 70%;}
.pane-thumb {height: 57%;}

.hbar {
    height: 12px;
    flex: none;
    display: flex;
    align-items: center;
    justify-content: space-between;
    padding: 0 16px 0 4px;
    background: #eeeff3;}

.hbar .thumb {
    width: 107px;
    height: 10px;
    background: linear-gradient(#f6f6f8, #c9cad0);}

.hbar .thumb::before {content: ""; width: 6px; height: 5px; background: repeating-linear-gradient(90deg, #555 0 1px, #0000 1px 2px);}
.lt {border: 3px solid transparent; border-left: 0; border-right-color: #222;}
.rt {border: 3px solid transparent; border-right: 0; border-left-color: #222;}

/* graphics area */
.view {
    flex: 1;
    min-width: 0;
    position: relative;
    background: #c4c8d4;
    border-right: 1px solid #5e647c;}

.model {
    position: absolute;
    top: 0;
    left: 0;
    width: 100%;
    height: 100%;}

.model text {font: 8px "Liberation Sans", sans-serif;}

.view-top {
    position: relative;
    display: flex;
    align-items: center;
    height: 20px;
    margin-top: 1px;
    padding: 0 4px 0 2px;}

.tree {
    width: 227px;
    display: flex;
    align-items: center;
    color: #14161d;}

.tree button {
    width: 7px;
    height: 7px;
    margin-right: 4px;
    border: 1px solid #666a78;
    font-size: 7px;
    line-height: 5px;}

.tree svg {margin-right: 2px;}
.headsup .caret {width: 8px;}
.headsup svg {opacity: 0.7;}
.headsup .on {background: #777b8e;}
.doc {margin-left: auto;}

.ghost {position: absolute; opacity: 0.3;}
.ghost svg {width: 18px; height: 18px;}
.yes {right: 56px; top: 25px;}
.no {right: 31px; top: 48px;}

.handle {
    position: absolute;
    left: -1px;
    top: 232px;
    width: 7px;
    height: 22px;
    flex-direction: column;
    gap: 3px;
    background: #e6e8f2;
    border: 1px solid #8086a0;
    border-radius: 0 3px 3px 0;}

.handle i {border: 2px solid transparent; border-top: 0; border-bottom: 3px solid #4c5688;}

.side-tabs {
    position: absolute;
    right: 0;
    top: 46px;
    width: 17px;}

.side-tabs button {
    width: 17px;
    height: 18px;
    border: 1px solid #6f7590;
    border-right: 0;
    border-radius: 3px 0 0 3px;
    background: #aeb4c8;}

.side-tabs .active {background: #f2f3f9;}

.sheet-tabs {
    height: 12px;
    flex: none;
    display: flex;
    padding-left: 1px;
    background: #e6e7ec;
    border-top: 1px solid #33363f;
    font: 9px/10px "Liberation Sans", sans-serif;
    color: #16181f;}

.sheet-tabs button {
    padding: 0 9px 0 7px;
    background: #b5bace;
    border: 1px solid #5a5f73;
    border-width: 0 1px 1px 0;}

.sheet-tabs .nav {width: 12px; padding: 0; color: #7b8095; font-size: 7px;}
.sheet-tabs .active {background: #eceef4; font-weight: bold; padding: 0 8px 0 7px;}

/* task pane */
.pane {
    width: 155px;
    flex: none;
    display: flex;
    flex-direction: column;
    position: relative;
    background: #e2e6f2;
    font-family: "Liberation Sans", sans-serif;}

.pane-head {
    height: 14px;
    flex: none;
    display: flex;
    align-items: center;
    justify-content: flex-end;
    gap: 25px;
    padding: 2px 3px 0 0;
    font: bold 8px/13px "Noto Sans", sans-serif;
    color: #43476e;
    background: linear-gradient(#dfe2ef, #c2c7dc);}

.pane-head svg {width: 10px; height: 10px;}

/* undocked bar lies over the pane header */
.float-bar {
    position: absolute;
    left: 2px;
    top: 11px;
    width: 122px;
    height: 23px;
    z-index: 1;
    display: flex;
    align-items: center;
    justify-content: space-between;
    padding: 0 1px 0 11px;
    font: bold 8px/20px "DejaVu Sans", sans-serif;
    color: #353a68;
    background: linear-gradient(#e8eaf5, #c2c7dd);
    border: 2px solid #767a90;}

.float-bar i {
    width: 12px;
    height: 10px;
    margin-bottom: 3px;
    border: 1px solid #4c5280;
    border-top-width: 3px;
    background: #dcdff6;}

.pane-scroll {flex: 1; min-height: 0; display: flex;}

.pane-body {
    flex: 1;
    min-width: 0;
    overflow: hidden;
    padding: 7px 3px 0 11px;}

.card {
    border: 1px solid #a5aac0;
    border-radius: 2px;
    margin-bottom: 15px;
    background: linear-gradient(#cdd3e5, #e2e6f4 90px);}

.card h3 {
    height: 16px;
    display: flex;
    align-items: center;
    justify-content: space-between;
    padding: 0 1px 0 3px;
    font-size: 9px;
    letter-spacing: 1px;
    color: #555b70;
    background: linear-gradient(#d8dbe6, #bcc1d2);}

.card h3 svg {width: 8px; height: 8px;}
.start-links h3 {justify-content: flex-end;}

.links a {
    display: flex;
    align-items: center;
    gap: 2px;
    height: 17px;
    padding-left: 1px;
    color: #1b2147;}

.community a {height: 16px;}
.community .news a {height: auto;}
.news {padding: 2px 0 0 15px;}

.news li {
    display: flex;
    align-items: center;
    gap: 3px;
    line-height: 10px;
    margin-bottom: 2px;
    white-space: nowrap;
    color: #44689f;}

.news li::before {
    content: "";
    width: 3px;
    height: 3px;
    border: 1px solid #e38b1e;
    border-width: 1px 1px 0 0;
    transform: rotate(45deg);}

.news .more {padding-left: 6px;}
.news .more::before {content: none;}

/* status bar */
.status {
    height: 14px;
    flex: none;
    display: flex;
    align-items: center;
    justify-content: flex-end;
    gap: 7px;
    padding-right: 10px;
    font: 9px/12px "Liberation Sans", sans-serif;
    color: #14161d;
    background: linear-gradient(#d8dbea, #b2b8d2);
    border-top: 1px solid #8489a0;}

.status .mode {margin-left: 5px;}

.qm {
    width: 10px;
    height: 10px;
    margin: 0 30px 0 18px;
    border: 1px solid #2e8a3a;
    background: #eefaf0;
    font-weight: bold;
    color: #1e8a2c;}

/* taskbar */
.taskbar {
    height: 21px;
    flex: none;
    display: flex;
    align-items: center;
    position: relative;
    background: linear-gradient(#5a5b5e, #3a3b3d 4px, #434446);
    color: #fff;}

.start {
    position: absolute;
    left: 6px;
    bottom: -3px;}

.start svg {width: 28px; height: 28px;}

.app {width: 31px; height: 21px;}
.app:nth-child(2) {margin-left: 45px;}
.app.open {margin-left: 4px; border: 1px solid #85878c; background: linear-gradient(#8d8f93, #55575b);}
.app.current {width: 26px; background: linear-gradient(#c9cacc, #8d8f93);}

.tray {
    margin-left: auto;
    display: flex;
    align-items: center;
    gap: 5px;
    margin-right: 10px;}

.tray svg {height: 11px;}
.tray .tri {border: 3px solid transparent; border-top: 0; border-bottom-color: #fff; margin-right: 5px;}
.tray time {font-size: 9px; margin-left: 10px;}

.desktop {
    width: 11px;
    height: 21px;
    border-left: 1px solid #77797d;
    background: #232427;}
```
